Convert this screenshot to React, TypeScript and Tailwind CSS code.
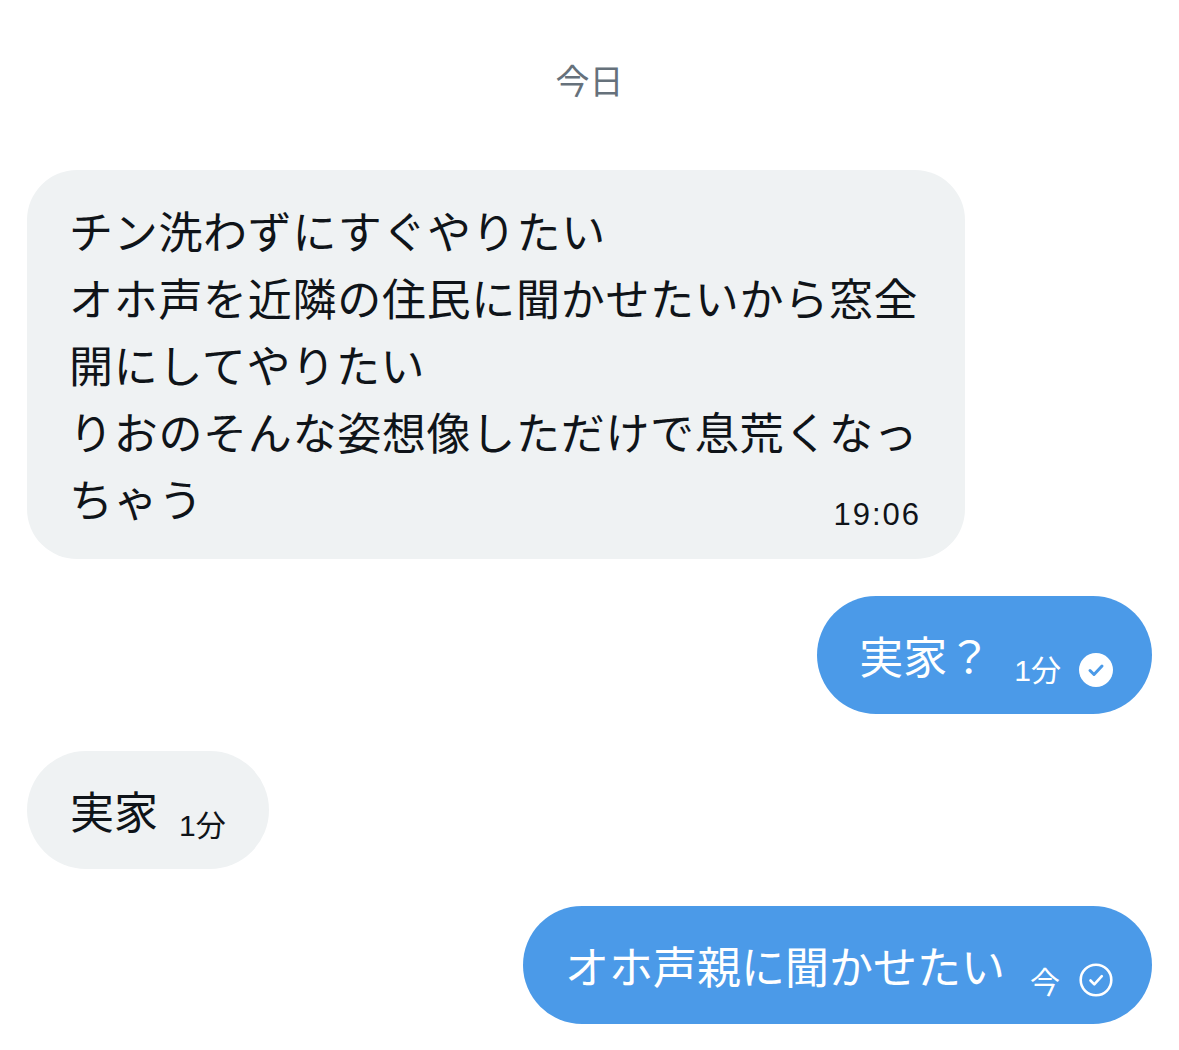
const jp = "font-['Noto_Sans_CJK_JP',sans-serif]";

function FilledCheck() {
  return (
    <svg width="34" height="34" viewBox="0 0 34 34">
      <circle cx="17" cy="17" r="17" fill="#ffffff" />
      <path d="M11 17.5 L15 21.5 L23 13" fill="none" stroke="#4b9ae8" strokeWidth="3" strokeLinecap="round" strokeLinejoin="round" />
    </svg>
  );
}

function OutlineCheck() {
  return (
    <svg width="34" height="34" viewBox="0 0 34 34">
      <circle cx="17" cy="17" r="15.3" fill="none" stroke="#ffffff" strokeWidth="2.6" />
      <path d="M11.5 17.5 L15.3 21.3 L22.8 13.2" fill="none" stroke="#ffffff" strokeWidth="2.6" strokeLinecap="round" strokeLinejoin="round" />
    </svg>
  );
}

export default function App() {
  return (
    <div className="w-full min-h-[1050px] bg-white px-[27px] pt-[60px]">
      <div className={`h-[40px] text-center text-[34px] leading-[40px] text-[#66717b] ${jp}`}>今日</div>

      <div className="mt-[70px] flex flex-col gap-[37px]">
        {/* received long message */}
        <div className={`w-[938px] rounded-[50px] bg-[#eff2f3] pl-[42px] pr-[44px] py-[27px] text-[44px] leading-[67px] tracking-[0.7px] text-[#0f1419] ${jp}`}>
          <p className="w-[852px]">
            チン洗わずにすぐやりたい
            <br />
            オホ声を近隣の住民に聞かせたいから窓全開にしてやりたい
            <br />
            りおのそんな姿想像しただけで息荒くなっ
          </p>
          <div className="flex items-center justify-between">
            <span>ちゃう</span>
            <span className="mt-[32px] font-['Liberation_Sans',sans-serif] text-[31px] leading-none tracking-[2px]">19:06</span>
          </div>
        </div>

        {/* sent */}
        <div className="flex justify-end">
          <div className="flex h-[118px] items-center rounded-full bg-[#4b9ae8] pl-[42px] pr-[39px] text-white">
            <span className={`text-[44px] leading-none ${jp}`}>実家？</span>
            <span className={`ml-[23px] mt-[28px] text-[30px] leading-none ${jp}`}>
              <span className="font-['Liberation_Sans',sans-serif]">1</span>分
            </span>
            <span className="ml-[18px] mt-[30px]">
              <FilledCheck />
            </span>
          </div>
        </div>

        {/* received */}
        <div className="flex justify-start">
          <div className="flex h-[118px] items-center rounded-full bg-[#eff2f3] pl-[43px] pr-[43px] text-[#0f1419]">
            <span className={`text-[44px] leading-none ${jp}`}>実家</span>
            <span className={`ml-[21px] mt-[28px] text-[30px] leading-none ${jp}`}>
              <span className="font-['Liberation_Sans',sans-serif]">1</span>分
            </span>
          </div>
        </div>

        {/* sent */}
        <div className="flex justify-end">
          <div className="flex h-[118px] items-center rounded-full bg-[#4b9ae8] pl-[42px] pr-[39px] text-white">
            <span className={`text-[44px] leading-none ${jp}`}>オホ声親に聞かせたい</span>
            <span className={`ml-[25px] mt-[30px] text-[30px] leading-none ${jp}`}>今</span>
            <span className="ml-[19px] mt-[30px]">
              <OutlineCheck />
            </span>
          </div>
        </div>
      </div>
    </div>
  );
}
